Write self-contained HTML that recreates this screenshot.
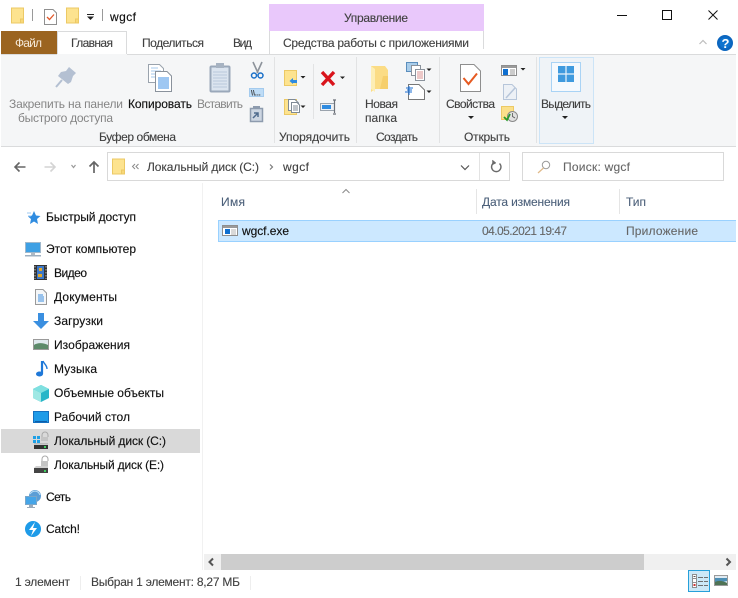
<!DOCTYPE html>
<html><head><meta charset="utf-8"><style>
html,body{margin:0;padding:0;background:#fff;width:738px;height:598px;overflow:hidden}
svg{display:block}
text{font-family:"Liberation Sans",sans-serif;font-size:12px;fill:#1e1e1e;white-space:pre}
.g{fill:#404040;stroke:#404040;stroke-width:.12}.d{fill:#858585}.h{fill:#4c607a;stroke:#4c607a;stroke-width:.1}.s{fill:#666;stroke:#666;stroke-width:.1}.n{fill:#111;stroke:#111;stroke-width:.15}
</style></head><body>
<svg width="738" height="598" viewBox="0 0 738 598" xmlns="http://www.w3.org/2000/svg">
<defs>
<g id="fold"><path d="M.5.5H12.5V15.5H.5Z" fill="#fde38f" stroke="#ecc965"/><path d="M9.5 11.5H12.5V15.5H9.5Z" fill="#f8d878" stroke="#ecc965"/></g>
</defs>
<!-- title bar -->
<use href="#fold" x="11" y="7.500"/>
<rect x="32" y="9" width="1" height="12" fill="#9a9a9a"/>
<path d="M44.500 9.500H53L56.500 13V24.500H44.500Z" fill="#fff" stroke="#8f8f8f"/>
<path d="M47 17L49.500 19.500L54 14.500" fill="none" stroke="#e2582a" stroke-width="1.300"/>
<use href="#fold" x="66" y="7.500"/>
<rect x="87" y="14" width="7" height="1" fill="#222"/><path d="M87 16.500H94L90.500 20Z" fill="#222"/>
<rect x="102" y="9" width="1" height="12" fill="#9a9a9a"/>
<text x="110" y="21" textLength="26" class="n">wgcf</text>
<rect x="269" y="4" width="215" height="27" fill="#e9c8fb"/>
<text x="344" y="22" textLength="64" class="g">Управление</text>
<!-- window buttons -->
<rect x="617" y="15" width="10" height="1" fill="#111"/>
<rect x="662.500" y="10.500" width="9" height="9" fill="none" stroke="#111"/>
<path d="M708.500 10.500L717.500 19.500M717.500 10.500L708.500 19.500" stroke="#111" fill="none"/>
<!-- tabs -->
<rect x="1" y="31" width="56" height="23" fill="#9b6420"/>
<text x="15" y="47" textLength="27" style="fill:#f5e9d8">Файл</text>
<path d="M57.500 54V31.500H126.500V54" fill="#fff" stroke="#dadbdc"/>
<text x="71" y="47" textLength="42" class="g">Главная</text>
<text x="142" y="47" textLength="62" class="g">Поделиться</text>
<text x="233" y="47" textLength="19" class="g">Вид</text>
<rect x="269" y="31" width="1" height="23" fill="#dadbdc"/>
<rect x="483" y="31" width="1" height="18" fill="#dadbdc"/>
<text x="283" y="47" textLength="186" class="g">Средства работы с приложениями</text>
<path d="M699.500 44L703 40.500L706.500 44" fill="none" stroke="#bdbdbd" stroke-width="1.200"/>
<circle cx="725" cy="43" r="8" fill="#0c66bf"/>
<circle cx="725" cy="43" r="5.500" fill="#0f74cf"/>
<text x="721.500" y="48" style="font-size:13px;font-weight:bold;fill:#fff">?</text>
<!-- ribbon -->
<rect x="1" y="54" width="735" height="92" fill="#f5f6f7"/>
<rect x="127" y="54" width="609" height="1" fill="#dadbdc"/>
<rect x="1" y="54" width="56" height="1" fill="#dadbdc"/>
<rect x="1" y="146" width="735" height="1" fill="#dadbdc"/>
<g fill="#e2e3e4"><rect x="274" y="57" width="1" height="86"/><rect x="356" y="57" width="1" height="86"/><rect x="439" y="57" width="1" height="86"/><rect x="536" y="57" width="1" height="86"/><rect x="313" y="64" width="1" height="55"/></g>
<!-- pin -->
<path d="M69 67L76 73L73 76L71 82L68 84L58 76L61 72L66 71Z" fill="#b4c0d2"/><path d="M62 80L56 87" stroke="#b4c0d2" stroke-width="2"/>
<text x="9" y="108" textLength="114" class="d">Закрепить на панели</text>
<text x="18" y="122" textLength="95" class="d">быстрого доступа</text>
<!-- copy -->
<path d="M148.500 64.500H159.500L163.500 68.500V82.500H148.500Z" fill="#fff" stroke="#9aa3ad"/>
<path d="M151 68H158M151 71H161M151 74H161M151 77H161" stroke="#a5c8ee"/>
<path d="M155.500 71.500H167L171.500 76V91.500H155.500Z" fill="#fff" stroke="#8a929c"/>
<path d="M158 78H169M158 80H169M158 82H169M158 84H169M158 86H169M158 88H169" stroke="#3d8fe6"/>
<text x="128" y="108" textLength="64" class="n">Копировать</text>
<!-- paste -->
<rect x="210.500" y="66.500" width="19" height="25" rx="1" fill="#dbe4ef" stroke="#9aa8ba" stroke-width="2"/>
<rect x="216" y="63" width="8" height="5" fill="#a7b3c2"/>
<path d="M213 72H227M213 75H227M213 78H227M213 81H227M213 84H227M213 87H227" stroke="#b9c7db"/>
<text x="197" y="108" textLength="46" class="d">Вставить</text>
<!-- scissors -->
<path d="M253 62L258 73M262 62L257 73" stroke="#8d939b" stroke-width="1.600" fill="none"/>
<circle cx="254" cy="75.500" r="2.500" fill="none" stroke="#1b70c8" stroke-width="1.500"/><circle cx="260.500" cy="75.500" r="2.500" fill="none" stroke="#1b70c8" stroke-width="1.500"/>
<rect x="249.500" y="88.500" width="14" height="8" fill="#bedcf6" stroke="#a4cbee"/>
<text x="251" y="95.500" style="font-size:7px;font-weight:bold;fill:#333">\\...</text>
<rect x="250.500" y="108.500" width="12" height="13" fill="#cdd6e2" stroke="#8d9bae" stroke-width="1.500"/><rect x="253" y="106" width="7" height="3" fill="#8d9bae"/>
<path d="M253 118L258 113M254 113H258V117" stroke="#4f6b8d" fill="none" stroke-width="1.500"/>
<text x="99" y="141" textLength="77" class="g">Буфер обмена</text>
<!-- move / copy to -->
<rect x="284.500" y="70.500" width="12" height="15" fill="#fde38f" stroke="#ecc965"/>
<path d="M293 78L289.500 81L293 84Z" fill="#2d8ae0"/><rect x="292" y="80" width="5" height="3" fill="#2d8ae0"/>
<path d="M300.500 76H305.500L303 78.500Z" fill="#222"/>
<rect x="284.500" y="99.500" width="12" height="15" fill="#fde38f" stroke="#ecc965"/>
<path d="M288.500 99.500H295L298.500 103V110.500H288.500Z" fill="#fff" stroke="#7f8a96"/><path d="M291.500 102.500H297L299.500 105V112.500H291.500Z" fill="#fff" stroke="#7f8a96"/>
<path d="M293 106H298M293 108H298M293 110H298" stroke="#7f8a96"/>
<path d="M300.500 105.500H305.500L303 108Z" fill="#222"/>
<!-- delete -->
<path d="M322 72L334 85M334 72L322 85" stroke="#d9141c" stroke-width="3.400" fill="none"/>
<path d="M340 76.500H345L342.500 79Z" fill="#222"/>
<!-- rename -->
<rect x="320.500" y="103.500" width="14" height="7" fill="#eef1f5" stroke="#9aa3ad"/><rect x="322" y="105" width="9" height="4" fill="#2f8be0"/>
<path d="M333 100H336M334.500 100V113M333 114H336" stroke="#6c7178" stroke-width="1.200"/>
<text x="279" y="141" textLength="71" class="g">Упорядочить</text>
<!-- new folder -->
<path d="M371 66H385L388 70V89H375L371 92Z" fill="#fbdc85"/><path d="M371 66L375 69V92L371 89Z" fill="#fdeeb5"/><path d="M383 76H388V89H380Z" fill="#f6cf6c"/>
<text x="365" y="108" textLength="33" class="g">Новая</text>
<text x="365" y="122" textLength="32" class="g">папка</text>
<!-- new item -->
<rect x="406.500" y="62.500" width="11" height="9" fill="#a9cdea" stroke="#5b8ebd"/>
<path d="M411.500 65.500H420.500V75.500H411.500Z" fill="#fff" stroke="#8a929c"/><path d="M415.500 69.500H424.500V80.500H415.500Z" fill="#fff" stroke="#8a929c"/>
<path d="M417 72H423M417 74H423M417 76H423M417 78H423" stroke="#d07070" stroke-width=".8"/>
<path d="M426.500 68.500H431.500L429 71Z" fill="#222"/>
<path d="M408.500 84.500H419L424.500 90V99.500H408.500Z" fill="#fff" stroke="#777"/>
<path d="M406 88H413M407 90H412M405 92H412" stroke="#1e6fd0"/><path d="M409 86V95" stroke="#1e6fd0"/>
<path d="M426.500 90.500H431.500L429 93Z" fill="#222"/>
<text x="376" y="141" textLength="42" class="g">Создать</text>
<!-- properties -->
<path d="M460.500 64.500H474L480.500 71V91.500H460.500Z" fill="#fff" stroke="#8e8e8e"/>
<path d="M463.500 78L468.500 84L477 73.500" fill="none" stroke="#e65a21" stroke-width="2"/>
<text x="446" y="108" textLength="49" class="g">Свойства</text>
<path d="M468 116H474L471 119Z" fill="#222"/>
<rect x="501.500" y="65.500" width="15" height="10" fill="#fff" stroke="#8e8e8e"/><rect x="502" y="66" width="14" height="2" fill="#9a9a9a"/>
<rect x="503" y="69" width="5" height="6" fill="#0f6fd0"/><path d="M510 70H515M510 72H515M510 74H515" stroke="#9a9a9a"/>
<path d="M520.500 68H525.500L523 70.500Z" fill="#222"/>
<path d="M503.500 84.500H512L516.500 89V99.500H503.500Z" fill="#edf1f6" stroke="#b7c6da"/><path d="M506 98L515 88" stroke="#b7c6da" stroke-width="1.500"/>
<rect x="501.500" y="106.500" width="12" height="13" fill="#fbe08a" stroke="#ecc965"/>
<circle cx="512.500" cy="116.500" r="5" fill="#e0e0e0" stroke="#8a8a8a"/><path d="M512.500 113V116.500L515 118" stroke="#555" fill="none" stroke-width=".8"/>
<path d="M504 117L507 120L510 114" stroke="#2a9a2a" fill="none" stroke-width="1.800"/>
<text x="464" y="141" textLength="46" class="g">Открыть</text>
<!-- select -->
<rect x="539.500" y="57.500" width="54" height="86" fill="#eff3f7" stroke="#cce4f7"/>
<rect x="551.500" y="62.500" width="29" height="29" fill="#f5f9fd" stroke="#a9d3f5"/>
<rect x="558" y="66" width="16" height="16" fill="#3f9ade"/>
<path d="M566 66V82M558 74H574" stroke="#eaf4fc" stroke-width="1.200"/>
<text x="541" y="108" textLength="50" class="g">Выделить</text>
<path d="M562 116H568L565 119Z" fill="#222"/>
<!-- nav arrows -->
<path d="M25.500 167H15M19.500 162.500L15 167L19.500 171.500" fill="none" stroke="#666" stroke-width="1.600"/>
<path d="M44.500 167H55M50.500 162.500L55 167L50.500 171.500" fill="none" stroke="#d4d4d4" stroke-width="1.600"/>
<path d="M71.500 165L73.500 167.500L75.500 165" fill="none" stroke="#9a9a9a" stroke-width="1.200"/>
<path d="M94 173V162M89.500 166.500L94 162L98.500 166.500" fill="none" stroke="#666" stroke-width="1.700"/>
<!-- address -->
<rect x="107.500" y="152.500" width="402" height="28" fill="#fff" stroke="#d9d9d9"/>
<rect x="479" y="153" width="1" height="27" fill="#e3e3e3"/>
<use href="#fold" x="112" y="158.500"/>
<path d="M135 164L132.500 166.500L135 169M138.500 164L136 166.500L138.500 169" stroke="#8a8a8a" fill="none"/>
<text x="147" y="171" textLength="112" class="g">Локальный диск (C:)</text>
<path d="M270 164.500L272.500 167L270 169.500" stroke="#7a7a7a" fill="none" stroke-width="1.200"/>
<text x="283" y="171" textLength="26" class="g">wgcf</text>
<path d="M461 165.500L465 169.500L469 165.500" stroke="#555" fill="none" stroke-width="1.200"/>
<path d="M499.500 163.500A4.700 4.700 0 1 1 494 162.800" fill="none" stroke="#6a6a6a" stroke-width="1.400"/><path d="M492.500 160V164.800L496 163Z" fill="#6a6a6a" stroke="#6a6a6a" stroke-width=".5"/>
<rect x="522.500" y="152.500" width="201" height="28" fill="#fff" stroke="#d9d9d9"/>
<circle cx="546" cy="165" r="3.700" fill="none" stroke="#9a9a9a"/><path d="M543.500 168L538 173" stroke="#e0b988" stroke-width="1.200"/>
<text x="563" y="171" textLength="67" class="s">Поиск: wgcf</text>
<!-- nav pane -->
<rect x="202" y="183" width="1" height="387" fill="#f1f1f1"/>
<rect x="1" y="429" width="199" height="24" fill="#d9d9d9"/>
<path d="M34 211L36 215.500L40.500 216L37 219L38 224L34 221.500L30 224L31 219L28 216.500L32 215.500Z" fill="#2f8ce0"/><path d="M27 213H31M28 216H31" stroke="#9cc9f0"/>
<text x="46" y="221" textLength="90" class="n">Быстрый доступ</text>
<rect x="25.500" y="242.500" width="15" height="10" fill="#3ea0e4" stroke="#9fb8cc"/><rect x="31" y="253" width="4" height="2" fill="#b0bac4"/><rect x="25" y="255" width="16" height="1.500" fill="#9fb0c0"/>
<text x="46" y="253" textLength="90" class="n">Этот компьютер</text>
<!-- video -->
<rect x="34" y="265" width="13" height="15" fill="#333"/><rect x="37" y="266" width="7" height="13" fill="#3d78c8"/><rect x="39" y="268" width="3" height="3" fill="#e3a92a"/><rect x="38" y="274" width="4" height="3" fill="#e3a92a"/>
<path d="M35 266V279M46 266V279" stroke="#bbb" stroke-dasharray="1.500 1.500"/>
<text x="54" y="277" textLength="33" class="n">Видео</text>
<!-- docs -->
<path d="M35.500 289.500H43L46.500 293V304.500H35.500Z" fill="#f4f6f8" stroke="#9a9a9a"/>
<path d="M38 295H43M38 297H44M38 299H44M38 301H44" stroke="#3d8fe0"/>
<text x="54" y="301" textLength="63" class="n">Документы</text>
<!-- downloads -->
<path d="M38 313H44V321H49L41 329L33 321H38Z" fill="#3a8fe0"/>
<text x="54" y="325" textLength="49" class="n">Загрузки</text>
<!-- pictures -->
<rect x="33.500" y="339.500" width="15" height="10" fill="#dfe9ee" stroke="#9a9a9a"/><path d="M34 345C38 342 44 343 48 345V349H34Z" fill="#5c8a6a"/>
<text x="54" y="349" textLength="76" class="n">Изображения</text>
<!-- music -->
<path d="M42 361V374" stroke="#1e78d8" stroke-width="2.200"/><path d="M43 361C44 364 47 365 47 369" stroke="#1e78d8" fill="none" stroke-width="1.400"/><ellipse cx="39.500" cy="374" rx="3.500" ry="2.500" fill="#1e78d8"/>
<text x="54" y="373" textLength="43" class="n">Музыка</text>
<!-- 3d -->
<path d="M41 385L49 389V398L41 402L33 398V389Z" fill="#29b6c8"/><path d="M33 389L41 393L49 389L41 385Z" fill="#7fe0e0"/><path d="M33 389L41 393V402L33 398Z" fill="#9fe8e4"/>
<text x="54" y="397" textLength="110" class="n">Объемные объекты</text>
<!-- desktop -->
<rect x="33.500" y="411.500" width="15" height="11" fill="#1e9be8" stroke="#1470c0"/><rect x="35" y="421" width="12" height="1" fill="#0e5da8"/>
<text x="54" y="421" textLength="76" class="n">Рабочий стол</text>
<!-- drive C -->
<g fill="#1ea0e6"><rect x="33" y="436" width="3" height="3"/><rect x="37" y="436" width="3" height="3"/><rect x="33" y="440" width="3" height="3"/><rect x="37" y="440" width="3" height="3"/></g>
<path d="M42 437V435A3 3 0 0 1 48 435V437" stroke="#a8a8a8" fill="none"/><rect x="41" y="437" width="7" height="4" fill="#c4c4c4"/>
<rect x="34" y="443" width="14" height="1.500" fill="#bbb"/><rect x="34" y="445" width="14" height="4" fill="#333"/><rect x="44" y="446" width="2" height="2" fill="#3fcf5f"/>
<text x="54" y="445" textLength="112" class="n">Локальный диск (C:)</text>
<!-- drive E -->
<path d="M42 461V459A3 3 0 0 1 48 459V461" stroke="#a8a8a8" fill="none"/><rect x="41" y="461" width="7" height="5" fill="#c4c4c4"/>
<path d="M36 466H48V468H34Z" fill="#d0d0d0"/><rect x="34" y="468" width="14" height="5" fill="#444"/><rect x="44" y="470" width="2" height="2" fill="#3fcf5f"/>
<text x="54" y="469" textLength="110" class="n">Локальный диск (E:)</text>
<!-- network -->
<circle cx="35" cy="496" r="6" fill="#5b9ed6"/><path d="M30 494C33 490 38 490 40 495" stroke="#bfe0f5" fill="none"/>
<rect x="25.500" y="496.500" width="11" height="8" fill="#45a5e8" stroke="#7aa6c8"/><rect x="29" y="505" width="4" height="2" fill="#9ab"/><rect x="27" y="507" width="8" height="1" fill="#9ab"/>
<text x="46" y="501" textLength="25" class="n">Сеть</text>
<!-- catch -->
<circle cx="33" cy="529" r="8" fill="#1e9be8"/><path d="M35 522L29 530H33L31 536L37 528H33Z" fill="#fff"/>
<text x="46" y="533" textLength="34" class="n">Catch!</text>
<!-- list header -->
<text x="221" y="206" textLength="24" class="h">Имя</text>
<path d="M342.500 193L346 189.500L349.500 193" fill="none" stroke="#8a8a8a"/>
<rect x="476" y="189" width="1" height="25" fill="#e5e5e5"/>
<rect x="619" y="189" width="1" height="25" fill="#e5e5e5"/>
<text x="482" y="206" textLength="88" class="h">Дата изменения</text>
<text x="626" y="206" textLength="20" class="h">Тип</text>
<!-- row -->
<rect x="218" y="220" width="518" height="22" fill="#99d1ff"/>
<rect x="219" y="221" width="517" height="20" fill="#cce8ff"/>
<rect x="222.500" y="225.500" width="15" height="10" fill="#fff" stroke="#8e8e8e"/><rect x="223" y="226" width="14" height="2" fill="#9a9a9a"/>
<rect x="225" y="229" width="5" height="5" fill="#0f6fd0"/><path d="M231 230H236M231 232H236M231 234H236" stroke="#9a9a9a" stroke-width=".8"/>
<text x="242" y="235" textLength="47" class="n">wgcf.exe</text>
<text x="482" y="235" textLength="85" class="s">04.05.2021 19:47</text>
<text x="626" y="235" textLength="72" class="s">Приложение</text>
<!-- scrollbar -->
<rect x="204" y="554" width="532" height="16" fill="#f0f0f0"/>
<rect x="221" y="554" width="423" height="16" fill="#cdcdcd"/>
<path d="M213 558.500L209.500 562L213 565.500" fill="none" stroke="#555" stroke-width="2"/>
<path d="M726.500 558.500L730 562L726.500 565.500" fill="none" stroke="#555" stroke-width="2"/>
<!-- status -->
<text x="15" y="586" textLength="55" class="g">1 элемент</text>
<rect x="80" y="576" width="1" height="14" fill="#eee"/>
<text x="91" y="586" textLength="149" class="g">Выбран 1 элемент: 8,27 МБ</text>
<rect x="250" y="576" width="1" height="14" fill="#eee"/>
<rect x="688.500" y="570.500" width="21" height="21" fill="#cce8f7" stroke="#26a0da"/>
<rect x="692.500" y="574.500" width="4" height="13" fill="#fff" stroke="#8e8e8e"/>
<path d="M693 578.500H696M693 582.500H696" stroke="#8e8e8e"/><rect x="693.500" y="584" width="2" height="2" fill="#c33"/><rect x="693.500" y="576" width="2" height="1" fill="#555"/>
<path d="M698 577.500H703M704 577.500H708M698 581.500H703M704 581.500H708M698 585.500H703M704 585.500H708" stroke="#707070"/>
<rect x="714.500" y="575.500" width="13" height="10" fill="#dfeaf2" stroke="#9a9a9a"/><path d="M715 578H727V581L715 584Z" fill="#4d8fb5"/><path d="M715 582C719 580 723 581 727 583V585H715Z" fill="#4f7355"/>
</svg>
</body></html>
